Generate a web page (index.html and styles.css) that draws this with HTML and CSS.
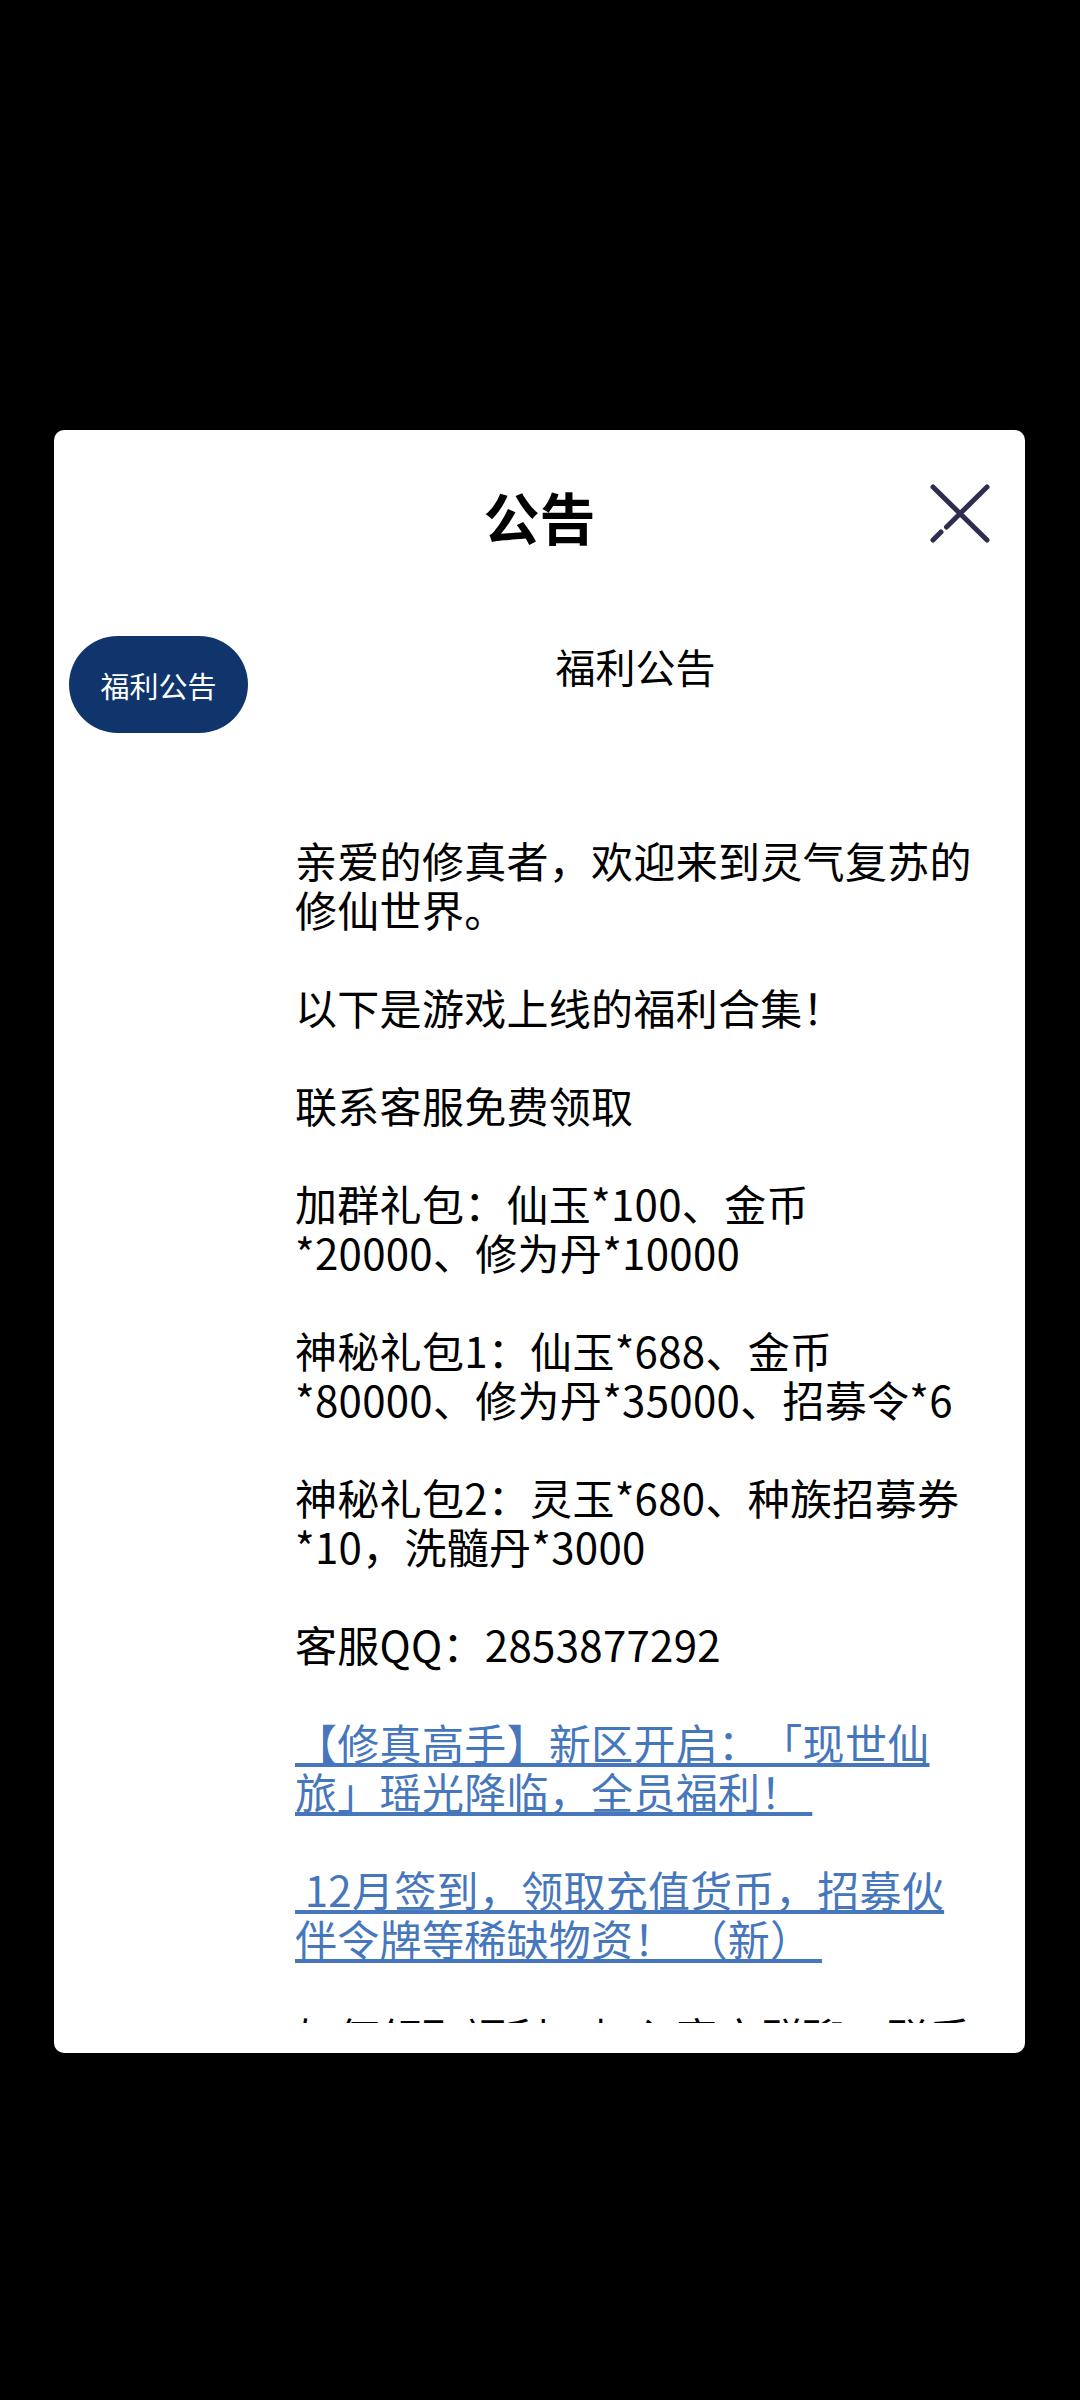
FILE: index.html
```html
<!DOCTYPE html>
<html lang="zh-CN">
<head>
    <meta charset="UTF-8">
    <meta name="viewport" content="width=device-width, initial-scale=1.0">
    <title>公告</title>
    <link rel="stylesheet" href="styles.css">
</head>
<body>
    <div id="notice-dialog">
        <div class="dialog-header">
            <h1 class="dialog-title">公告</h1>
            <button class="close-button" aria-label="关闭">
                <svg width="60" height="60" viewBox="0 0 60 60">
                    <path d="M3 3 L57 56 M57 3 L16.5 43 M11 48 L3 56" fill="none" stroke="#2e2d4f" stroke-width="5" stroke-linecap="round"/>
                </svg>
            </button>
        </div>
        <div class="dialog-body">
            <div class="tab-list">
                <div class="tab active">福利公告</div>
            </div>
            <div class="notice-content">
                <h2 class="notice-title">福利公告</h2>
                <p class="notice-text">
                    亲爱的修真者，欢迎来到灵气复苏的修仙世界。<br><br>
                    以下是游戏上线的福利合集！<br><br>
                    联系客服免费领取<br><br>
                    加群礼包：仙玉*100、金币*20000、修为丹*10000<br><br>
                    神秘礼包1：仙玉*688、金币*80000、修为丹*35000、招募令*6<br><br>
                    神秘礼包2：灵玉*680、种族招募券*10，洗髓丹*3000<br><br>
                    客服QQ：2853877292<br><br>
                    <a href="#">【修真高手】新区开启：「现世仙旅」瑶光降临，全员福利！&nbsp;</a><br><br>
                    <a href="#">&nbsp;12月签到，领取充值货币，招募伙伴令牌等稀缺物资！ （新）&nbsp;</a><br><br>
                    如何领取福利：加入官方群聊，联系群主领取礼包
                </p>
            </div>
        </div>
    </div>
</body>
</html>
```

FILE: styles.css
```css
body {
    background-color: #000;
    margin: 0;
    height: 2400px;
    padding-top: 430px;
    box-sizing: border-box;
    font-family: "Noto Sans CJK SC", "Noto Sans", sans-serif;
    text-spacing-trim: space-all;
}

#notice-dialog {
    background-color: #fff;
    border-radius: 10px;
    width: 971px;
    height: 1623px;
    margin-left: 54px;
    display: flex;
    flex-direction: column;
}

.dialog-header {
    position: relative;
    height: 172px;
    display: flex;
    align-items: center;
    justify-content: center;
    flex-shrink: 0;
}

.dialog-title {
    margin: 0;
    font-size: 56px;
    line-height: 60px;
    font-weight: bold;
    color: #000;
}

.close-button {
    position: absolute;
    top: 54px;
    right: 35px;
    width: 60px;
    height: 60px;
    padding: 0;
    border: none;
    background: none;
}

.close-button svg {
    display: block;
}

.dialog-body {
    flex: 1;
    display: flex;
    overflow: hidden;
    margin-bottom: 30px;
}

.tab-list {
    width: 180px;
    padding-left: 15px;
    padding-top: 34px;
    flex-shrink: 0;
}

.tab {
    width: 179px;
    height: 97px;
    border-radius: 49px;
    background-color: #10356d;
    color: #fff;
    font-size: 29px;
    display: flex;
    align-items: center;
    justify-content: center;
}

.notice-content {
    flex: 1;
    padding: 0 49px 0 46px;
}

.notice-title {
    margin: 39px 0 0;
    font-size: 40px;
    line-height: 50px;
    font-weight: normal;
    text-align: center;
    color: #000;
}

.notice-text {
    margin: 144px 0 0;
    font-size: 42px;
    line-height: 49px;
    color: #000;
    letter-spacing: 0.3px;
}

.notice-text a {
    color: #4677bd;
    text-decoration: underline;
}
```
